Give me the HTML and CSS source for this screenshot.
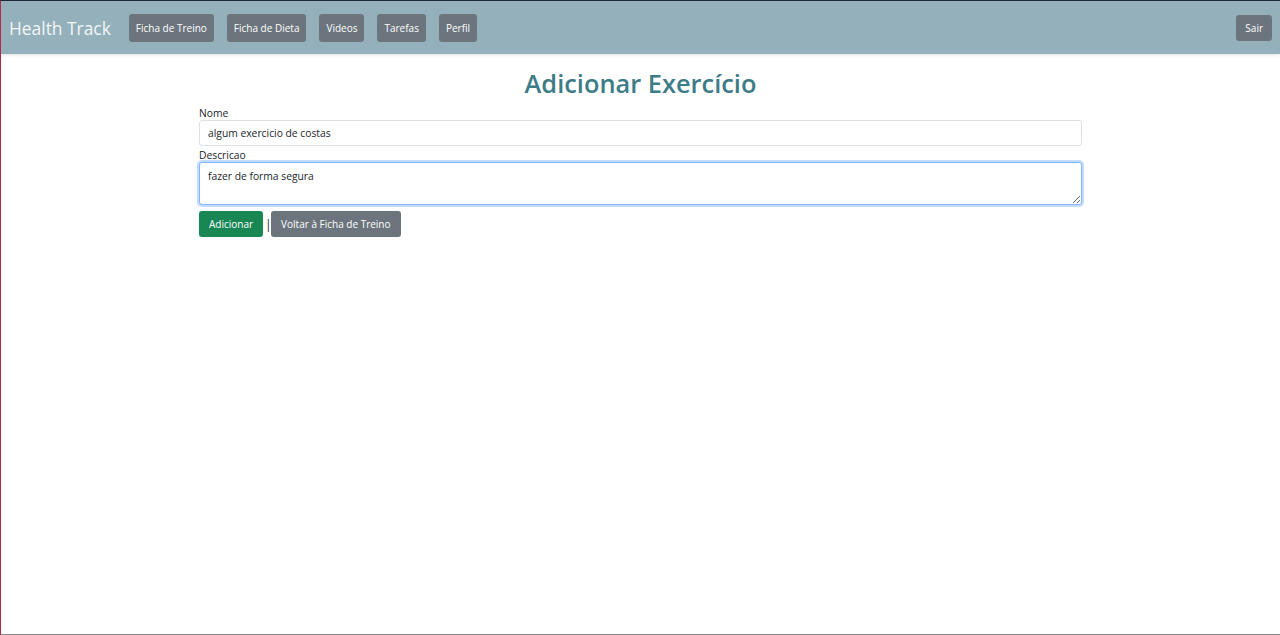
FILE: index.html
```html
<!DOCTYPE html>
<html lang="pt">
<head>
<meta charset="utf-8">
<title>Adicionar Exercício</title>
<link rel="stylesheet" href="styles.css">
</head>
<body>
<div class="frame">
  <nav class="navbar">
    <a class="brand" href="#">Health Track</a>
    <div class="nav-links">
      <a class="btn btn-secondary" href="#">Ficha de Treino</a>
      <a class="btn btn-secondary" href="#">Ficha de Dieta</a>
      <a class="btn btn-secondary" href="#">Videos</a>
      <a class="btn btn-secondary" href="#">Tarefas</a>
      <a class="btn btn-secondary" href="#">Perfil</a>
    </div>
    <a class="btn btn-secondary btn-exit" href="#">Sair</a>
  </nav>
  <main class="container">
    <h1 class="title">Adicionar Exercício</h1>
    <form class="form">
      <label class="label" for="nome">Nome</label>
      <input class="control" id="nome" type="text" value="algum exercicio de costas">
      <label class="label" for="desc">Descricao</label>
      <textarea class="control textarea focused" id="desc">fazer de forma segura</textarea>
      <div class="actions">
        <button class="btn btn-success" type="button">Adicionar</button>
        <span class="sep">|</span>
        <a class="btn btn-secondary btn-back" href="#">Voltar à Ficha de Treino</a>
      </div>
    </form>
  </main>
</div>
</body>
</html>
```
FILE: styles.css
```css
* { box-sizing: border-box; }
html, body { margin: 0; padding: 0; height: 100%; }
body {
  font-family: "Open Sans", "Noto Sans", "Liberation Sans", sans-serif;
  color: #212529;
  background: #fff;
}
.frame {
  height: 635px;
  border-top: 1px solid #1e2a33;
  border-left: 1px solid #b0284a;
  border-bottom: 1px solid #8a8a8a;
  overflow: hidden;
}
.navbar {
  display: flex;
  align-items: center;
  height: 53px;
  padding: 0 8px 0 8px;
  background: #93b0bb;
  box-shadow: 0 1px 3px rgba(0,0,0,0.12);
}
.brand {
  color: #f4f6f7;
  font-size: 17.4px;
  text-decoration: none;
  margin-right: 18px;
}
.nav-links { display: flex; gap: 13px; }
.btn {
  display: inline-flex;
  align-items: center;
  height: 28px;
  padding: 0 7px;
  font-family: inherit;
  font-size: 10px;
  border-radius: 3px;
  border: none;
  color: #fff;
  text-decoration: none;
  cursor: pointer;
}
.btn-secondary { background: #6c757d; }
.btn-success { background: #198754; padding: 0 10px; }
.btn-back { padding: 0 10px; }
.btn-exit { margin-left: auto; height: 26px; padding: 0 9px; }
.container {
  width: 883px;
  margin: 0 auto;
}
.title {
  margin: 13px 0 7px;
  text-align: center;
  font-size: 25.4px;
  font-weight: 600;
  color: #3d7c87;
  line-height: 32px;
}
.form { display: flex; flex-direction: column; }
.label {
  font-size: 10.3px;
  line-height: 14px;
  color: #212529;
}
.control {
  width: 100%;
  height: 26px;
  margin: 0 0 2px;
  padding: 0 8px;
  font-family: inherit;
  font-size: 10.3px;
  color: #212529;
  border: 1px solid #dee2e6;
  border-radius: 3px;
  background: #fff;
  outline: none;
}
.textarea {
  height: 43px;
  padding: 5px 8px;
  resize: vertical;
  line-height: 16px;
}
.focused {
  border-color: #86b7fe;
  box-shadow: 0 0 0 2px rgba(13,110,253,0.25);
}
.actions {
  display: flex;
  align-items: center;
  margin-top: 4px;
}
.actions .btn { height: 26px; }
.sep {
  width: 4px;
  margin: 0 2px;
  text-align: center;
  font-size: 12px;
  color: #212529;
}
```
